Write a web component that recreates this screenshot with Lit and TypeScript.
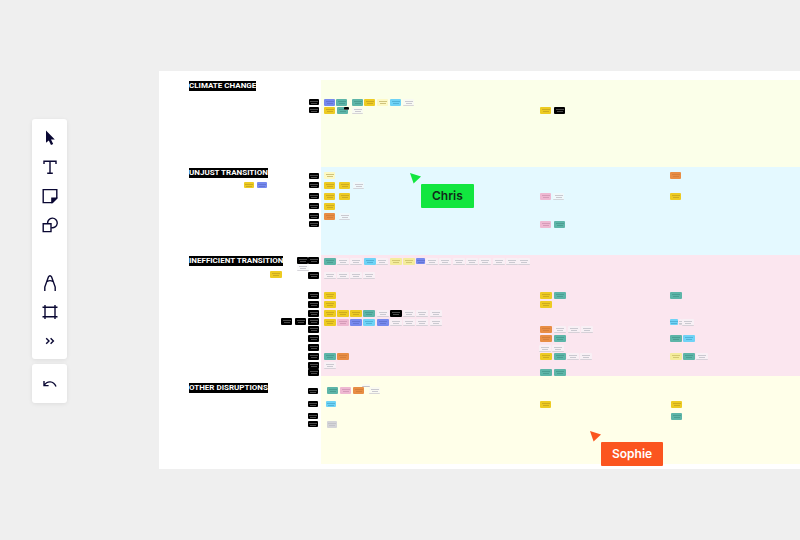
import { LitElement, html, svg, css } from 'lit';
import { customElement, property } from 'lit/decorators.js';
import { styleMap } from 'lit/directives/style-map.js';

// [kind, x, y, width?, height?], in pixels from the band's top left corner
type Note = [string, number, number, number?, number?];

interface Band {
  title: string;
  tone: string;
  noteWidth: number;
  notes: Note[];
}

// a run of same-size notes that share a row
const row = (y: number, ...items: [string, number][]): Note[] =>
  items.map(([kind, x]): Note => [kind, x, y]);

const tags = (x: number, w: number, h: number, ...ys: number[]): Note[] =>
  ys.map((y): Note => ['black', x, y, w, h]);

const whites = (y: number, ...xs: number[]): Note[] =>
  xs.map((x): Note => ['white', x, y]);

const BANDS: Band[] = [
  {
    title: 'CLIMATE CHANGE',
    tone: 'lime',
    noteWidth: 11,
    notes: [
      ...tags(150, 10, 6, 19, 27),
      ...row(19, ['blue', 165], ['teal', 177], ['teal', 193], ['yellow', 205], ['cream', 218], ['sky', 231]),
      ...whites(19, 244),
      ...row(27, ['yellow', 165], ['teal', 178], ['white', 193]),
      ['black', 185, 27, 5, 3],
      ...row(27, ['yellow', 381], ['black', 395]),
    ],
  },
  {
    title: 'UNJUST TRANSITION',
    tone: 'ice',
    noteWidth: 11,
    notes: [
      ...tags(150, 10, 6, 6, 15, 26, 36, 46, 54),
      ['yellow', 85, 15, 10, 6],
      ['blue', 98, 15, 10, 6],
      ...row(5, ['cream', 165], ['orange', 511]),
      ...row(15, ['yellow', 165], ['yellow', 180], ['white', 194]),
      ...row(26, ['yellow', 165], ['yellow', 180], ['pink', 381], ['white', 394], ['yellow', 511]),
      ...row(36, ['yellow', 165]),
      ...row(46, ['orange', 165], ['white', 180]),
      ...row(54, ['pink', 381], ['teal', 395]),
    ],
  },
  {
    title: 'INEFFICIENT TRANSITION',
    tone: 'rose',
    noteWidth: 12,
    notes: [
      ...tags(149, 11, 7, 2, 17, 37, 46, 55, 63, 71, 80, 89, 98, 107, 114),
      ...tags(138, 11, 7, 2),
      ...tags(122, 11, 7, 63),
      ...tags(136, 11, 7, 63),
      ...whites(9, 138),
      ['yellow', 111, 16, 12, 7],
      ...row(3, ['teal', 165], ['white', 178], ['white', 191], ['sky', 205], ['white', 217]),
      ...row(3, ['lemon', 231], ['lemon', 244]),
      ['blue', 257, 3, 9, 6],
      ...whites(3, 267, 280, 294, 307, 320, 334, 347, 359),
      ...whites(17, 165, 178, 191, 204),
      ...row(37, ['yellow', 165], ['yellow', 381], ['teal', 395], ['teal', 511]),
      ...row(46, ['yellow', 165], ['yellow', 381]),
      ...row(55, ['yellow', 165], ['yellow', 178], ['yellow', 191], ['teal', 204], ['white', 218]),
      ...row(55, ['black', 231], ['white', 244], ['white', 257], ['white', 271]),
      ...row(64, ['yellow', 165], ['pink', 178], ['blue', 191], ['sky', 204], ['blue', 218]),
      ...whites(64, 231, 244, 257, 271),
      ['sky', 511, 64, 8, 6],
      ['white', 520, 64, 3, 6],
      ...whites(64, 523),
      ...row(71, ['orange', 381], ['white', 395], ['white', 409], ['white', 422]),
      ...row(80, ['orange', 381], ['teal', 395], ['teal', 511], ['sky', 524]),
      ...whites(90, 380, 393),
      ...row(98, ['teal', 165], ['orange', 178], ['yellow', 381], ['teal', 395]),
      ...whites(98, 408, 421),
      ...row(98, ['lemon', 511], ['teal', 524], ['white', 537]),
      ...whites(107, 165),
      ...row(114, ['teal', 381], ['teal', 395]),
    ],
  },
  {
    title: 'OTHER DISRUPTIONS',
    tone: 'butter',
    noteWidth: 11,
    notes: [
      ...tags(149, 10, 6, 12, 25, 37, 45),
      ['white', 203, 8, 8, 3],
      ...row(11, ['teal', 168], ['pink', 181], ['orange', 194], ['white', 210]),
      ['sky', 167, 25, 10, 6],
      ['grey', 168, 45, 10, 7],
      ...row(25, ['yellow', 381], ['yellow', 512]),
      ...row(37, ['teal', 512]),
    ],
  },
];

@customElement('board-band')
class BoardBand extends LitElement {
  static styles = css`
    :host {
      display: block;
    }

    .band {
      position: relative;
      display: flex;
      min-height: 88px;
    }

    .side {
      box-sizing: border-box;
      width: 162px;
      padding: 1px 0 0 30px;
    }

    .lane {
      flex: 1;
    }

    .lime .lane { background: #fbffe9; }
    .ice .lane { background: #e4f9ff; }
    .rose .lane { background: #fbe6ef; }
    .butter .lane { background: #ffffe9; }

    .lime {
      min-height: 87px;
    }

    .rose {
      min-height: 121px;
    }

    .butter .side {
      padding-top: 7px;
    }

    .title {
      width: max-content;
      margin: 0;
      background: #000;
      color: #fff;
      font: 700 8px/10px Roboto, sans-serif;
    }

    /* two rows of scribbled text on every note */
    .note {
      position: absolute;
      border-radius: 1px;
      background-image: linear-gradient(currentColor, currentColor), linear-gradient(currentColor, currentColor);
      background-size: 8px 1px, 6px 1px;
      background-position: 50% 2px, 50% 4px;
      background-repeat: no-repeat;
    }

    .yellow { background-color: #edcb22; color: #cdab1f; }
    .teal { background-color: #5db5a8; color: #4a9e92; }
    .blue { background-color: #7689ee; color: #6375d4; }
    .sky { background-color: #6fd3f6; color: #52b3d8; }
    .orange { background-color: #e88d44; color: #d57f3a; }
    .pink { background-color: #efb8d2; color: #d59cb9; }
    .cream { background-color: #fdf9c4; color: #cfc37c; }
    .lemon { background-color: #f4ec9c; color: #d3c873; }
    .grey { background-color: #d4d4d8; color: #c3c3c9; }
    .black { background-color: #000; color: #4a4a4a; }

    .white {
      box-sizing: border-box;
      border-bottom: 1px solid rgba(190, 188, 196, 0.6);
      background-color: rgba(246, 246, 248, 0.6);
      color: #cac9d0;
    }
  `;

  @property({ attribute: false }) band!: Band;

  render() {
    const { title, tone, noteWidth, notes } = this.band;
    return html`
      <section class="band ${tone}">
        <div class="side"><h2 class="title">${title}</h2></div>
        <div class="lane"></div>
        ${notes.map(([kind, x, y, w = noteWidth, h = 7]) => html`
          <div
            class="note ${kind}"
            style=${styleMap({ left: `${x}px`, top: `${y}px`, width: `${w}px`, height: `${h}px` })}
          ></div>
        `)}
      </section>
    `;
  }
}

@customElement('user-cursor')
class UserCursor extends LitElement {
  static styles = css`
    :host {
      display: block;
    }

    .arrow {
      display: block;
      fill: currentColor;
    }

    .name {
      width: max-content;
      margin-left: 11px;
      padding: 0 11px;
      border-radius: 1px;
      background: currentColor;
      font: 600 12px/24px Inter, sans-serif;
    }

    .dark { color: #10291a; }
    .light { color: #fff; }
  `;

  @property() name = '';
  @property() ink = 'dark';

  render() {
    return html`
      <svg class="arrow" width="12" height="11" viewBox="0 0 12 11"><path d="M0 0L11 3.6L3.6 10.6Z" /></svg>
      <div class="name"><span class=${this.ink}>${this.name}</span></div>
    `;
  }
}

const TOOLS = [
  { name: 'Select', icon: svg`<path class="solid" d="M4 .6V12.8L6.8 10.4L9 15L11.2 14L9 9.6H12.8Z" />` },
  { name: 'Text', icon: svg`<path d="M2 5V2.2H14V5M8 2.2V14.2M5.2 14.2H10.8" />` },
  {
    name: 'Sticky note',
    icon: svg`<path d="M1.2 1.6H14.8V10L10 14.6H1.2Z" /><path class="solid" d="M9.2 15.2V9.5H15.4V10.4L10.6 15.2Z" />`,
  },
  {
    name: 'Shapes',
    icon: svg`<path d="M1.2 6.8H9V14.6H1.2Z" /><path d="M5.7 6.8A4.8 4.8 0 1 1 9.2 10.6" />`,
  },
  { name: '', icon: '' },
  { name: 'Pen', icon: svg`<path d="M2.8 16V12L6.3 2.2Q8 -.6 9.7 2.2L13.2 12V16M5.2 6.4Q8 4.8 10.8 6.4" />` },
  { name: 'Frame', icon: svg`<path d="M.5 3.3H15.5M.5 12.7H15.5M3 1V15M13 1V15" />` },
  { name: 'More tools', icon: svg`<path d="M4.2 5.2L7 8L4.2 10.8M8.6 5.2L11.4 8L8.6 10.8" />` },
];

@customElement('tool-bar')
class ToolBar extends LitElement {
  static styles = css`
    :host {
      display: flex;
      flex-direction: column;
      gap: 5px;
    }

    .panel {
      display: flex;
      flex-direction: column;
      padding: 4px 0;
      border-radius: 3px;
      background: #fff;
      box-shadow: 0 1px 4px rgba(0, 0, 0, 0.08);
    }

    .history {
      padding: 5px 0;
    }

    .tool,
    .gap {
      height: 29px;
    }

    .tool {
      display: flex;
      align-items: center;
      justify-content: center;
      padding: 0;
      border: 0;
      background: none;
      cursor: pointer;
    }

    .icon {
      fill: none;
      stroke: #0a0833;
      stroke-width: 1.4;
    }

    .solid {
      fill: #0a0833;
      stroke: none;
    }
  `;

  _tool(name: string, icon: unknown) {
    return html`
      <button class="tool" aria-label=${name}>
        <svg class="icon" width="16" height="16" viewBox="0 0 16 16">${icon}</svg>
      </button>
    `;
  }

  render() {
    return html`
      <div class="panel">
        ${TOOLS.map((t) => (t.name ? this._tool(t.name, t.icon) : html`<div class="gap"></div>`))}
      </div>
      <div class="panel history">
        ${this._tool('Undo', svg`<path d="M2 5V9.6H6.6M2.2 9.4C5 4.6 11.6 4.4 14 10.6" />`)}
      </div>
    `;
  }
}

@customElement('app-root')
class AppRoot extends LitElement {
  static styles = css`
    :host {
      display: flex;
      align-items: center;
      min-height: 100vh;
      background: #efefef;
      overflow: hidden;
    }

    .tools {
      width: 35px;
      margin: 0 92px 18px 32px;
    }

    .board {
      position: relative;
      flex: 1;
      padding: 9px 0 5px;
      background: #fff;
    }

    .cursor {
      position: absolute;
    }

    .chris {
      left: 251px;
      top: 102px;
      color: #12e63f;
    }

    .sophie {
      left: 431px;
      top: 360px;
      color: #fb551f;
    }
  `;

  render() {
    return html`
      <tool-bar class="tools"></tool-bar>
      <main class="board">
        ${BANDS.map((band) => html`<board-band .band=${band}></board-band>`)}
        <user-cursor class="cursor chris" name="Chris" ink="dark"></user-cursor>
        <user-cursor class="cursor sophie" name="Sophie" ink="light"></user-cursor>
      </main>
    `;
  }
}
